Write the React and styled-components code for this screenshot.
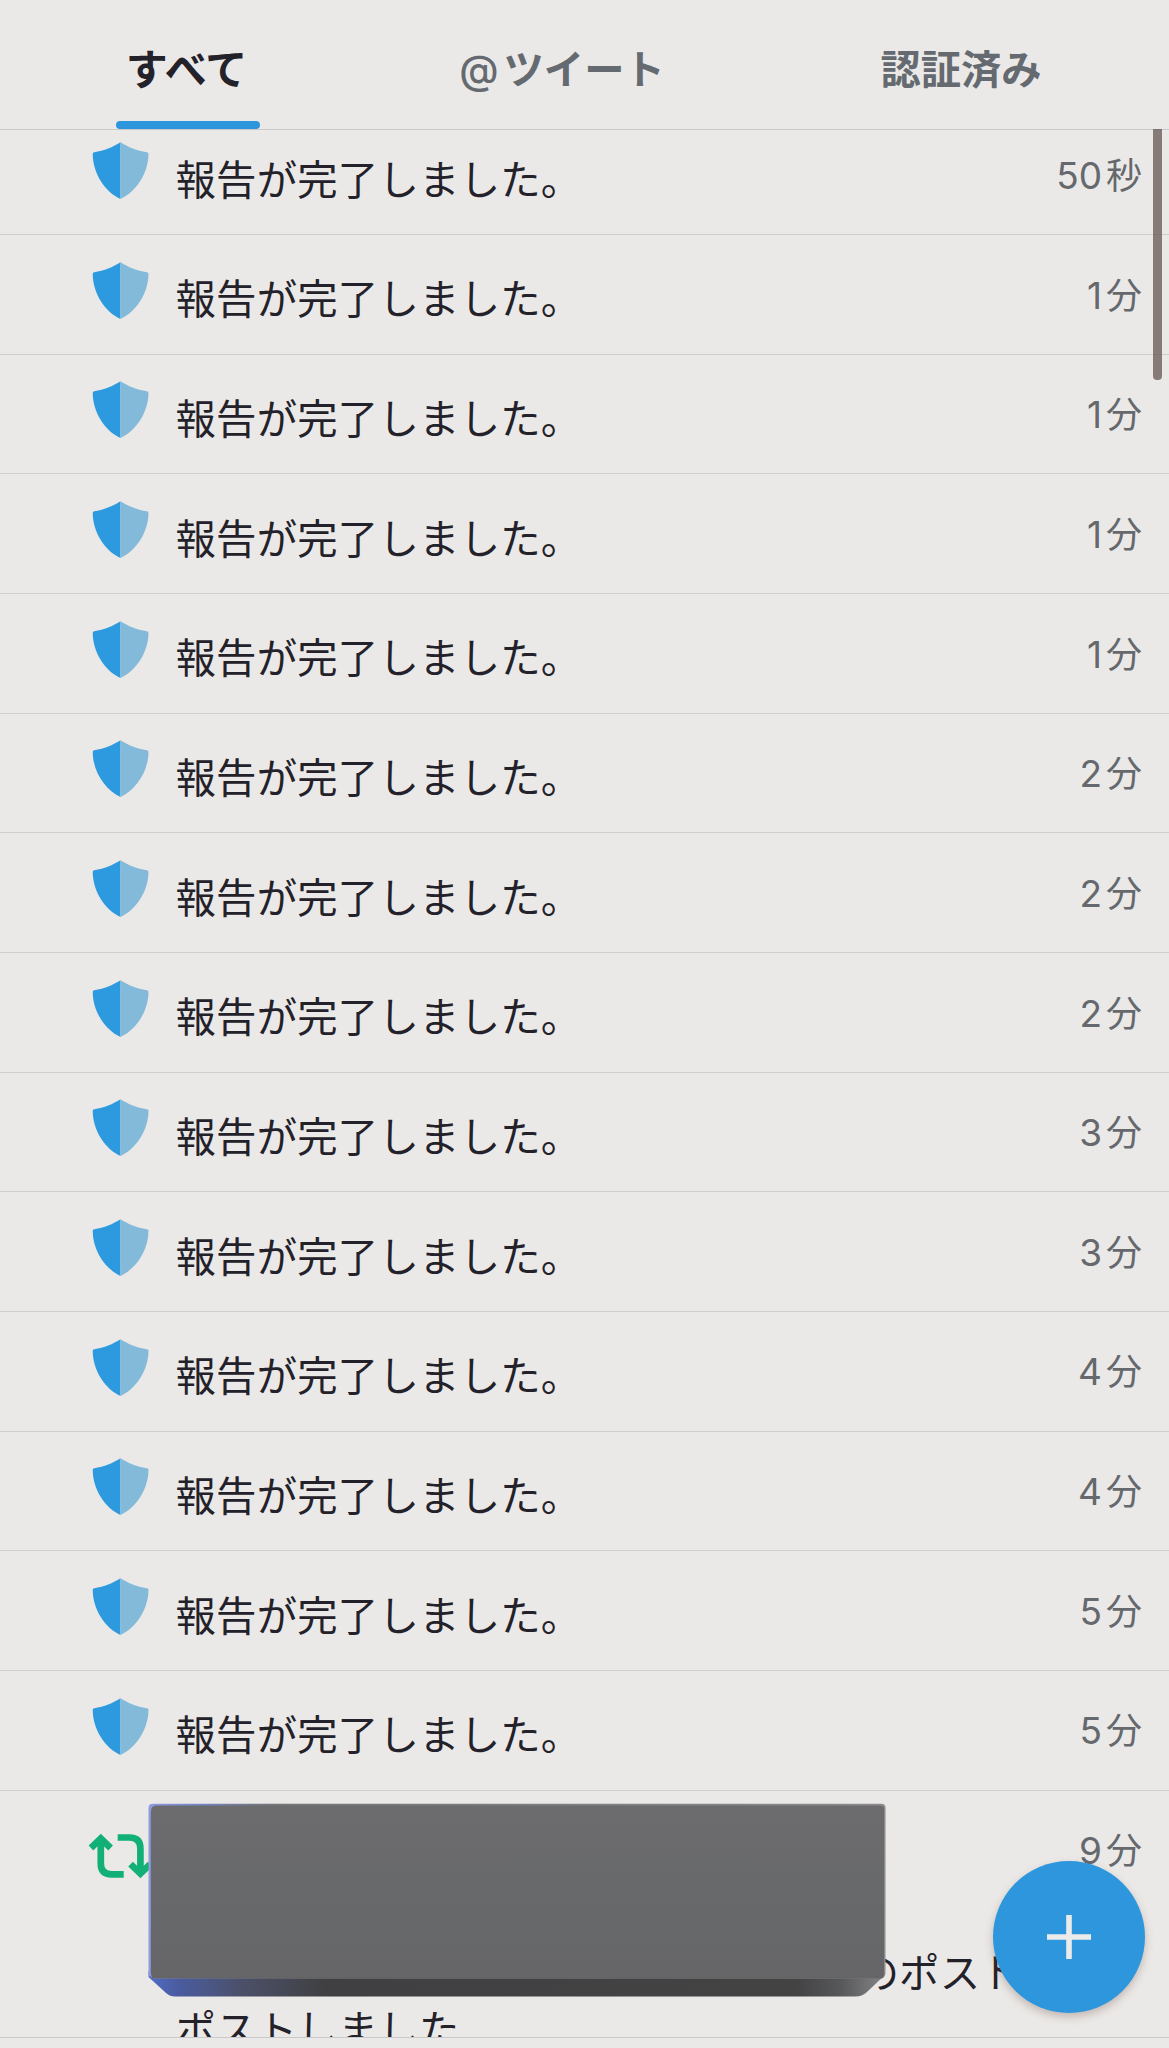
import React from "react";
import styled, { createGlobalStyle } from "styled-components";

const Global = createGlobalStyle`
  * { box-sizing: border-box; }
  body {
    margin: 0;
    background: #ebe9e7;
    font-family: "Noto Sans CJK JP", sans-serif;
  }
`;

const Screen = styled.main`
  position: relative;
  display: flex;
  flex-direction: column;
  width: 1169px;
  height: 2048px;
  overflow: hidden;
  background: #ebe9e7;
  color: #232129;
`;

const Tabs = styled.nav`
  display: grid;
  grid-template-columns: 376px 372px 426px;
  flex: none;
  height: 130px;
  border-bottom: 1px solid #c9c8ca;
`;

const Tab = styled.div`
  display: flex;
  flex-direction: column;
  align-items: center;
  justify-content: space-between;
  padding-top: 37px;
  font-size: 40.3px;
  line-height: 60px;
  font-weight: 700;
  color: ${(p) => (p.$active ? "#23222b" : "#646a70")};
  white-space: nowrap;
`;

const ActiveLabel = styled.span`
  margin-left: -3px;
  font-size: 42px;
`;

const At = styled.span`
  margin-right: 5px;
  font-family: Inter, sans-serif;
  font-size: 40px;
  line-height: 1;
  font-weight: 500;
`;

const Underline = styled.div`
  width: 144px;
  height: 8.5px;
  border-radius: 4.25px;
  background: #2d96dc;
`;

const List = styled.div`
  display: flex;
  flex-direction: column;
  flex: none;
  height: 1908px;
  overflow: hidden;
  border-bottom: 1px solid #c9c8ca;
`;

const Row = styled.article`
  display: flex;
  align-items: flex-start;
  flex: none;
  height: ${(p) => (p.$tall ? "280px" : "119.67px")};
  margin-top: ${(p) => (p.$first ? "-14.7px" : "0")};
  padding: 0 27px 0 92px;
  border-bottom: 1px solid #cfcdce;
`;

const Shield = styled.svg`
  flex: none;
  width: 57px;
  height: 57px;
  margin-top: 26.800px;
`;

const Repost = styled.svg`
  flex: none;
  width: 66px;
  height: 47px;
  margin: 42.2px -5px 0 -4px;
`;

const Message = styled.div`
  flex: 1;
  margin: ${(p) => (p.$tall ? "151.700px 0 0 26.500px" : "32.400px 0 0 26.500px")};
  font-size: 40.4px;
  letter-spacing: 0.2px;
  line-height: ${(p) => (p.$tall ? "57px" : "60px")};
  white-space: nowrap;
`;

const FirstLine = styled.div`
  padding-left: 683px;
`;

const Time = styled.time`
  display: flex;
  align-items: baseline;
  gap: 4px;
  margin-top: 30.6px;
  font-size: 36px;
  line-height: 54px;
  color: #65686c;
`;

const Digits = styled.span`
  font-family: Inter, sans-serif;
  font-size: 37px;
`;

const Scrollbar = styled.div`
  position: absolute;
  top: 129px;
  right: 7.5px;
  width: 8.5px;
  height: 251px;
  border-radius: 0 0 4px 4px;
  background: rgba(94, 80, 76, 0.72);
`;

const Block = styled.svg`
  position: absolute;
  left: 148px;
  top: 1803px;
  width: 738px;
  height: 194px;
`;

const Compose = styled.button`
  position: absolute;
  left: 993px;
  top: 1861px;
  display: flex;
  align-items: center;
  justify-content: center;
  width: 152px;
  height: 152px;
  padding: 0;
  border: 0;
  border-radius: 50%;
  background: #2d96dc;
  box-shadow: 0 4px 9px rgba(100, 70, 60, 0.3);
`;

const rows = [
  ["50", "秒"], ["1", "分"], ["1", "分"], ["1", "分"], ["1", "分"],
  ["2", "分"], ["2", "分"], ["2", "分"], ["3", "分"], ["3", "分"],
  ["4", "分"], ["4", "分"], ["5", "分"], ["5", "分"],
];

function ShieldIcon() {
  return (
    <Shield viewBox="0 0 57 57">
      <path d="M28.5 .3V57C13 50 .7 31 .7 12Q.7 10.400 2.300 10.200C12 9 21 5 28.500 .3Z" fill="#2d9adf" />
      <path d="M28.500 .3V57C44 50 56.500 31 56.500 12Q56.500 10.400 54.900 10.200C45 9 36 5 28.500 .3Z" fill="#83bada" />
    </Shield>
  );
}

function RepostIcon() {
  return (
    <Repost viewBox="0 0 66 47" fill="none" stroke="#12b076" strokeWidth="6.7">
      <path d="M3 15 12.800 5.500 22.600 15" />
      <path d="M12.800 6V30.500Q12.800 41.400 23.700 41.400H35.700" />
      <path d="M29.700 4.500H41.500Q52.400 4.500 52.400 15.400V40" />
      <path d="M42.600 31.200 52.400 40.700 62.200 31.200" />
    </Repost>
  );
}

function RedactionBlock() {
  return (
    <Block viewBox="0 0 738 194">
      <defs>
        <linearGradient id="edge">
          <stop offset="0" stopColor="#8e9ce2" />
          <stop offset=".07" stopColor="#7485c8" />
          <stop offset=".16" stopColor="#737579" />
          <stop offset="1" stopColor="#8b8b8b" />
        </linearGradient>
        <linearGradient id="face" x2="0" y2="1">
          <stop offset="0" stopColor="#6c6c6e" />
          <stop offset=".7" stopColor="#67686a" />
          <stop offset="1" stopColor="#656567" />
        </linearGradient>
        <linearGradient id="bevel">
          <stop offset="0" stopColor="#526cc5" />
          <stop offset=".04" stopColor="#4a5ca0" />
          <stop offset=".13" stopColor="#4b5068" />
          <stop offset=".24" stopColor="#404042" />
          <stop offset=".88" stopColor="#434344" />
          <stop offset=".94" stopColor="#57585a" />
          <stop offset="1" stopColor="#858586" />
        </linearGradient>
      </defs>
      <path d="M.5 168V174L18 190Q22 193.600 27 193.600H707Q715 193.600 720 188L737 172V168Z" fill="url(#bevel)" />
      <path d="M5 .8H733Q737.500 .8 737.500 5V171Q737 174 734 175.500H5L.5 172V5Q.5 .8 5 .8Z" fill="url(#edge)" />
      <path d="M8 2.500H732Q736 2.500 736 6V171Q736 175.500 732 175.500H4L2.800 170V9Q3 2.500 8 2.500Z" fill="url(#face)" />
    </Block>
  );
}

export default function App() {
  return (
    <Screen>
      <Global />
      <Tabs>
        <Tab $active><ActiveLabel>すべて</ActiveLabel><Underline /></Tab>
        <Tab><span><At>@</At>ツイート</span></Tab>
        <Tab>認証済み</Tab>
      </Tabs>
      <List>
        {rows.map(([n, unit], i) => (
          <Row key={i} $first={i === 0}>
            <ShieldIcon />
            <Message>報告が完了しました。</Message>
            <Time><Digits>{n}</Digits>{unit}</Time>
          </Row>
        ))}
        <Row $tall>
          <RepostIcon />
          <Message $tall>
            <FirstLine>のポスト</FirstLine>
            <div>ポストしました</div>
          </Message>
          <Time><Digits>9</Digits>分</Time>
        </Row>
      </List>
      <Scrollbar />
      <RedactionBlock />
      <Compose aria-label="新規投稿">
        <svg width="44" height="44" viewBox="0 0 44 44">
          <path d="M22 0V44M0 22H44" stroke="#ebebea" strokeWidth="5.600" />
        </svg>
      </Compose>
    </Screen>
  );
}
